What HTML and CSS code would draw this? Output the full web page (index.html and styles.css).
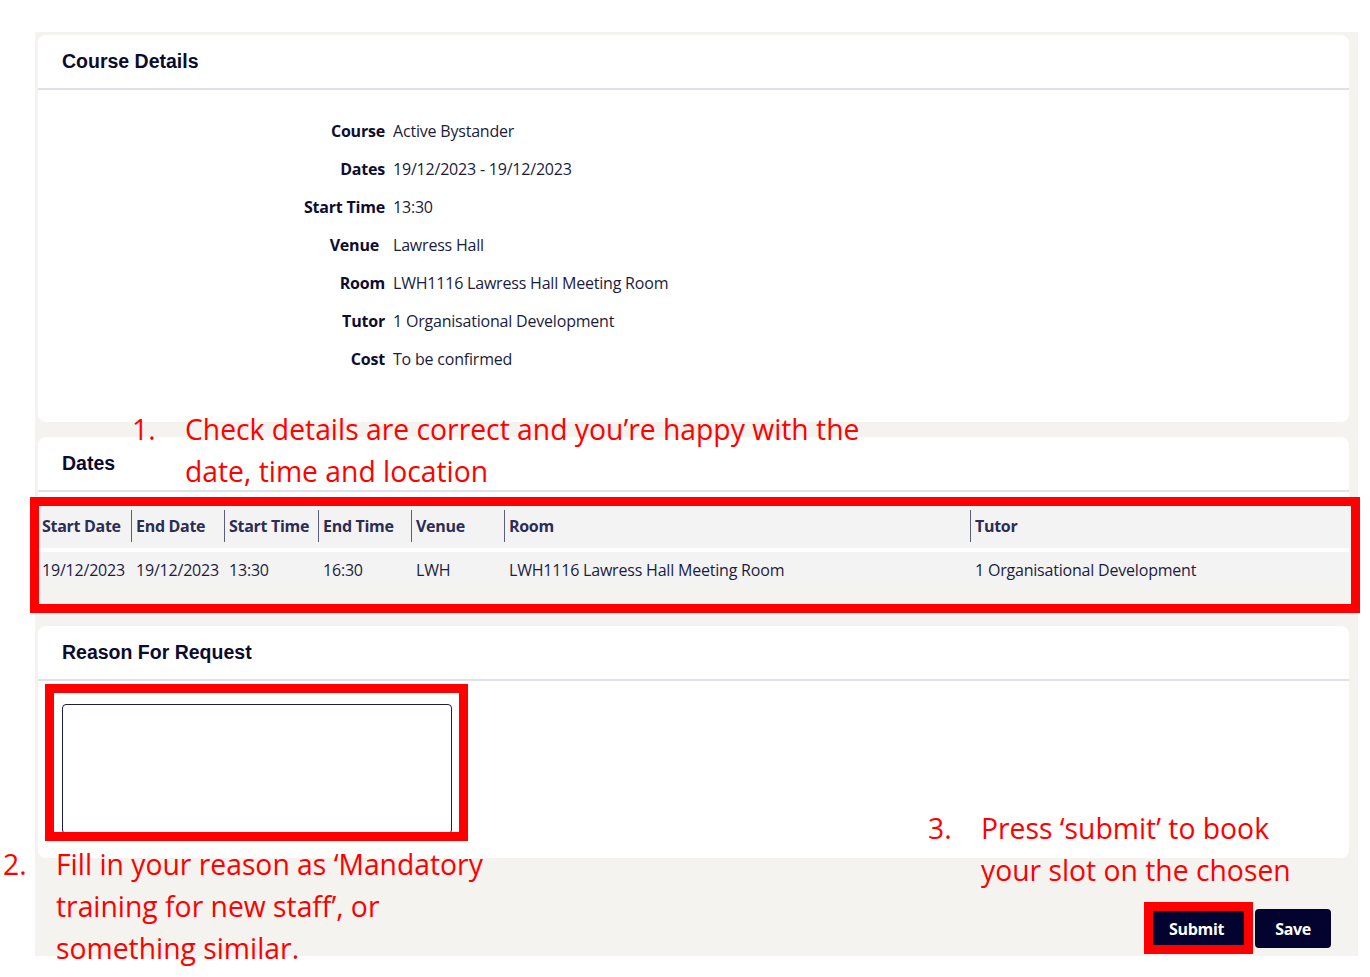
FILE: index.html
```html
<!DOCTYPE html>
<html lang="en">
<head>
<meta charset="utf-8">
<title>Course Booking</title>
<link rel="stylesheet" href="styles.css">
</head>
<body>
<main class="page">
  <section class="card">
    <h2 class="card-head">Course Details</h2>
    <div class="details">
      <span class="lbl">Course</span><span class="val">Active Bystander</span>
      <span class="lbl">Dates</span><span class="val">19/12/2023 - 19/12/2023</span>
      <span class="lbl">Start Time</span><span class="val">13:30</span>
      <span class="lbl lbl-venue">Venue</span><span class="val">Lawress Hall</span>
      <span class="lbl">Room</span><span class="val">LWH1116 Lawress Hall Meeting Room</span>
      <span class="lbl">Tutor</span><span class="val">1 Organisational Development</span>
      <span class="lbl">Cost</span><span class="val">To be confirmed</span>
    </div>
  </section>

  <section class="card card-dates">
    <h2 class="card-head">Dates</h2>
    <div class="tbl">
      <div class="tr th">
        <div class="cell">Start Date</div>
        <div class="cell">End Date</div>
        <div class="cell">Start Time</div>
        <div class="cell">End Time</div>
        <div class="cell">Venue</div>
        <div class="cell">Room</div>
        <div class="cell">Tutor</div>
      </div>
      <div class="tr td">
        <div class="cell">19/12/2023</div>
        <div class="cell">19/12/2023</div>
        <div class="cell">13:30</div>
        <div class="cell">16:30</div>
        <div class="cell">LWH</div>
        <div class="cell">LWH1116 Lawress Hall Meeting Room</div>
        <div class="cell">1 Organisational Development</div>
      </div>
    </div>
  </section>

  <section class="card card-reason">
    <h2 class="card-head">Reason For Request</h2>
    <div class="reason-body">
      <textarea class="ta" aria-label="Reason For Request"></textarea>
    </div>
  </section>

  <div class="actions">
    <button class="btn" type="button">Submit</button>
    <button class="btn" type="button">Save</button>
  </div>
</main>

<div class="notes">
  <div class="hl hl-dates"></div>
  <div class="hl hl-reason"></div>
  <div class="hl hl-submit"></div>

  <div class="note note-1"><span class="num">1.</span><span class="txt">Check details are correct and you’re happy with the<br>date, time and location</span></div>
  <div class="note note-2"><span class="num">2.</span><span class="txt">Fill in your reason as ‘Mandatory<br>training for new staff’, or<br>something similar.</span></div>
  <div class="note note-3"><span class="num">3.</span><span class="txt">Press ‘submit’ to book<br>your slot on the chosen</span></div>
</div>
</body>
</html>
```

FILE: styles.css
```css
html, body {
  margin: 0;
  padding: 0;
  background: #ffffff;
}

body {
  position: relative;
  width: 1370px;
  height: 977px;
  overflow: hidden;
  font-family: "Open Sans", "Noto Sans", sans-serif;
}

.page {
  margin: 32px 12px 0 35px;
  padding: 3px 9px 8px 3px;
  background: #f4f3ef;
  display: flex;
  flex-direction: column;
}

.card {
  background: #ffffff;
  border-radius: 8px;
  overflow: hidden;
}

.card-head {
  margin: 0;
  height: 53px;
  padding: 0 0 0 24px;
  display: flex;
  align-items: center;
  border-bottom: 2px solid #e0e0e8;
  font-family: "Liberation Sans", Arial, sans-serif;
  font-weight: 700;
  font-size: 19.5px;
  color: #0b0b2e;
}

/* Course details */
.details {
  display: grid;
  grid-template-columns: 347px auto;
  column-gap: 8px;
  grid-auto-rows: 38px;
  align-items: center;
  padding: 22px 0 44px;
  font-size: 16px;
}

.lbl {
  text-align: right;
  font-weight: 700;
  color: #0d0d30;
  letter-spacing: -0.2px;
}

.lbl-venue {
  padding-right: 6px;
}

.val {
  color: #1b1b3c;
  letter-spacing: -0.2px;
}

/* Dates */
.card-dates {
  margin-top: 15px;
}

.tbl {
  margin-top: 8px;
  display: flex;
  flex-direction: column;
  gap: 4px;
  font-size: 16px;
}

.tr {
  display: grid;
  grid-template-columns: 93px 93px 94px 93px 93px 466px 1fr;
  background: #f3f3f3;
  align-items: center;
}

.th {
  height: 48px;
  padding-top: 4px;
  box-sizing: border-box;
  font-weight: 700;
  color: #2c2c55;
}

.th .cell {
  height: 32px;
  line-height: 32px;
  padding-left: 4px;
  border-left: 1px solid #5c5c7c;
  letter-spacing: -0.3px;
  white-space: nowrap;
}

.th .cell:first-child {
  border-left: none;
}

.td {
  height: 36px;
  color: #1c1c42;
}

.td .cell {
  padding-left: 5px;
  letter-spacing: -0.2px;
  white-space: nowrap;
}

.td .cell:first-child {
  padding-left: 4px;
}

/* Reason */
.card-reason {
  margin-top: 38px;
}

.reason-body {
  padding: 23px 24px 24px;
}

.ta {
  display: block;
  width: 390px;
  height: 130px;
  box-sizing: border-box;
  margin: 0;
  border: 1px solid #1d1d45;
  border-radius: 4px;
  background: #ffffff;
  resize: none;
}

/* Actions */
.actions {
  margin-top: 51px;
  display: flex;
  justify-content: flex-end;
  gap: 11px;
  padding-right: 18px;
}

.btn {
  height: 39px;
  padding: 0 20px;
  border: none;
  border-radius: 4px;
  background: #03032f;
  color: #ffffff;
  font-family: "Open Sans", sans-serif;
  font-weight: 700;
  font-size: 16px;
  letter-spacing: -0.3px;
}

/* Annotation layer */
.notes {
  position: absolute;
  inset: 0;
  pointer-events: none;
}

.hl {
  position: absolute;
  box-sizing: border-box;
  border: 9px solid #ff0000;
}

.hl-dates {
  left: 30px;
  top: 497px;
  width: 1330px;
  height: 116px;
}

.hl-reason {
  left: 45px;
  top: 684px;
  width: 423px;
  height: 157px;
}

.hl-submit {
  left: 1144px;
  top: 902px;
  width: 109px;
  height: 52px;
}

.note {
  position: absolute;
  display: flex;
  color: #ff0000;
  font-family: "Open Sans", "Noto Sans", sans-serif;
  font-size: 28.3px;
  line-height: 42px;
  white-space: nowrap;
}

.note .num {
  width: 53px;
  flex: none;
}

.note-1 {
  left: 132px;
  top: 408px;
}

.note-2 {
  left: 3px;
  top: 843px;
}

.note-3 {
  left: 928px;
  top: 807px;
}
```
